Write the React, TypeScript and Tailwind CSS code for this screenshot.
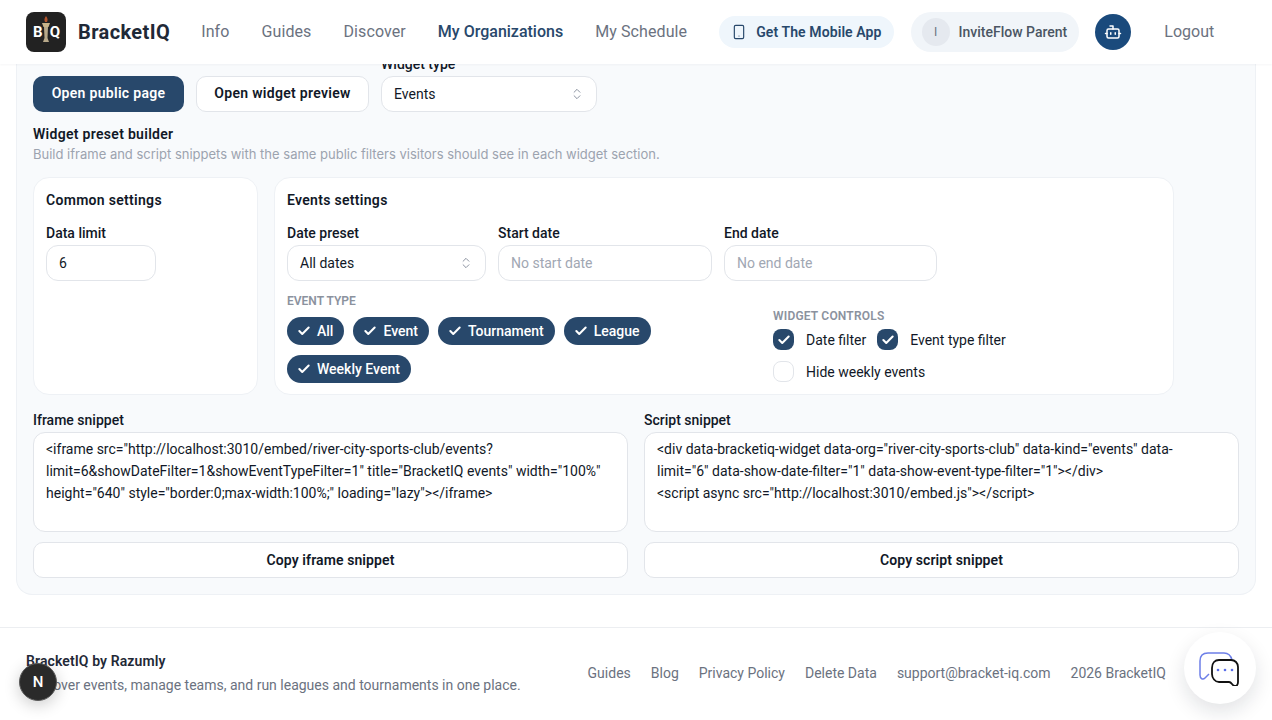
import { Check, ChevronsUpDown, Smartphone, Bot } from "lucide-react";

const navLinks = ["Info", "Guides", "Discover", "My Organizations", "My Schedule"];
const eventTypes = ["All", "Event", "Tournament", "League", "Weekly Event"];
const footerLinks = ["Guides", "Blog", "Privacy Policy", "Delete Data", "support@bracket-iq.com", "2026 BracketIQ"];

const iframeSnippet =
  '<iframe src="http://localhost:3010/embed/river-city-sports-club/events?limit=6&showDateFilter=1&showEventTypeFilter=1" title="BracketIQ events" width="100%" height="640" style="border:0;max-width:100%;" loading="lazy"></iframe>';
const scriptSnippet =
  '<div data-bracketiq-widget data-org="river-city-sports-club" data-kind="events" data-\nlimit="6" data-show-date-filter="1" data-show-event-type-filter="1"></div>\n<script async src="http://localhost:3010/embed.js"></script>';

function Logo() {
  return (
    <div className="relative flex h-10 w-10 items-center justify-center rounded-lg bg-[#222222]">
      <svg viewBox="0 0 40 40" className="absolute inset-0 h-10 w-10">
        <path d="M20 4c1.600 2 2 4 1 6h-2c-1-2-.6-4 1-6z" fill="#b4552d" />
        <path d="M16 11h8l-1.500 4h-5z" fill="#c9b48a" />
        <path d="M18 15h4l-.5 11 1.500 4h-6l1.500-4z" fill="#b8a98a" />
      </svg>
      <span className="relative flex w-full justify-between pr-[6px] pl-[7px] text-[15px] leading-none font-bold text-white">
        <span>B</span>
        <span>Q</span>
      </span>
    </div>
  );
}

function Header() {
  return (
    <header className="relative z-10 flex h-16 shrink-0 items-center bg-white pl-[26px] shadow-[0_1px_2px_rgba(15,23,42,0.04)]">
      <Logo />
      <span className="ml-3 text-[20px] font-bold tracking-[0.4px] text-[#1f2937]">BracketIQ</span>
      <nav className="ml-[31px] flex items-center gap-8">
        {navLinks.map((l) => (
          <span
            key={l}
            className={
              l === "My Organizations"
                ? "text-base font-medium text-[#28486b]"
                : "text-base tracking-[0.1px] text-[#6b7280]"
            }
          >
            {l}
          </span>
        ))}
      </nav>
      <div className="ml-8 flex h-8 items-center gap-[9px] rounded-full bg-[#eff6fc] px-3">
        <Smartphone size={16} strokeWidth={1.75} className="text-[#28486b]" />
        <span className="text-sm font-semibold tracking-[0.1px] text-[#28486b]">Get The Mobile App</span>
      </div>
      <div className="ml-[17px] flex h-10 items-center gap-[9px] rounded-full bg-[#f1f5f9] pr-3 pl-[11px]">
        <span className="flex h-7 w-7 items-center justify-center rounded-full bg-[#e5e9ef] text-xs text-[#6b7280]">
          I
        </span>
        <span className="text-sm font-medium text-[#4b5563]">InviteFlow Parent</span>
      </div>
      <div className="ml-4 flex h-9 w-9 items-center justify-center rounded-full bg-[#1a4a7c]">
        <Bot size={18} strokeWidth={2} className="text-white" />
      </div>
      <span className="ml-[33px] text-base text-[#6b7280]">Logout</span>
    </header>
  );
}

function Field({ label, width, children }: { label: string; width: string; children: React.ReactNode }) {
  return (
    <div className={width}>
      <div className="text-sm leading-6 font-medium text-[#111827]">{label}</div>
      {children}
    </div>
  );
}

function Box({ value, placeholder, select }: { value?: string; placeholder?: string; select?: boolean }) {
  return (
    <div className="flex h-9 items-center justify-between rounded-xl border border-[#e2e5ea] bg-white pr-3 pl-3 text-sm">
      <span className={value ? "text-[#111827]" : "text-[#a1a7b3]"}>{value ?? placeholder}</span>
      {select && <ChevronsUpDown size={14} strokeWidth={1.5} className="text-[#7b8494]" />}
    </div>
  );
}

function Chip({ label }: { label: string }) {
  return (
    <span className="flex h-7 items-center gap-[6px] rounded-full bg-[#28486b] pr-[11px] pb-px pl-[10px] text-sm font-medium text-white">
      <Check size={14} strokeWidth={3.5} />
      {label}
    </span>
  );
}

function Checkbox({ label, checked }: { label: string; checked?: boolean }) {
  return (
    <div className="flex items-center gap-3">
      <span
        className={
          checked
            ? "flex h-[21px] w-[21px] items-center justify-center rounded-lg bg-[#28486b] text-white"
            : "h-[21px] w-[21px] rounded-lg border border-[#e2e5ea] bg-white"
        }
      >
        {checked && <Check size={14} strokeWidth={3.5} />}
      </span>
      <span className="text-sm text-[#111827]">{label}</span>
    </div>
  );
}

function Snippet({ label, text, button }: { label: string; text: string; button: string }) {
  return (
    <div className="flex-1">
      <div className="mb-[3px] text-sm leading-[18px] font-medium text-[#111827]">{label}</div>
      <div className="h-[100px] rounded-xl border border-[#e2e5ea] bg-white px-3 py-[5px] text-sm leading-[22px] break-words whitespace-pre-wrap text-[#111827]">
        {text}
      </div>
      <div className="mt-[10px] flex h-9 items-center justify-center rounded-[10px] border border-[#e2e5ea] bg-white text-sm font-semibold tracking-[0.1px] text-[#111827]">
        {button}
      </div>
    </div>
  );
}

function ChatBubble() {
  return (
    <div className="absolute top-[632px] left-[1184px] flex h-[72px] w-[72px] items-center justify-center rounded-full bg-white shadow-[0_8px_20px_rgba(15,23,42,0.12)]">
      <svg viewBox="0 0 44 36" className="h-9 w-11" fill="none">
        <path
          d="M34 10c-1-4-4-7-8-7H10C5 3 2 6 2 11v14c0 4 3 5 5 3l4-4"
          stroke="#6d7fe8"
          strokeWidth="1.5"
        />
        <path
          d="M21 10h12c4 0 7 3 7 7v15c0 3-1 4-3 4-3 0-3-4-6-4H21c-4 0-7-4-7-8V18c0-5 3-8 7-8z"
          stroke="#111111"
          strokeWidth="1.8"
          fill="#ffffff"
        />
        <circle cx="20" cy="20" r="1.300" fill="#5b6ee8" />
        <circle cx="27" cy="20" r="1.300" fill="#5b6ee8" />
        <circle cx="34" cy="20" r="1.300" fill="#5b6ee8" />
      </svg>
    </div>
  );
}

export default function App() {
  return (
    <div className="relative flex h-[720px] flex-col overflow-hidden bg-white font-['Roboto',sans-serif]">
      <Header />
      <main className="mx-4 -mt-[12px] rounded-b-2xl border border-t-0 border-[#eef1f5] bg-[#f8fafc] px-4 pb-4">
        <div className="flex items-end gap-3">
          <span className="flex h-9 w-[151px] items-center justify-center rounded-[10px] bg-[#28486b] pb-[2px] text-sm font-semibold tracking-[0.3px] text-white">
            Open public page
          </span>
          <span className="flex h-9 w-[173px] items-center justify-center rounded-[10px] border border-[#e2e5ea] bg-white pb-[2px] text-sm font-semibold tracking-[0.3px] text-[#111827]">
            Open widget preview
          </span>
          <Field label="Widget type" width="w-[216px]">
            <Box value="Events" select />
          </Field>
        </div>

        <div className="mt-[12px] text-sm leading-5 font-semibold tracking-[0.3px] text-[#111827]">
          Widget preset builder
        </div>
        <div className="font-['Inter',sans-serif] text-[13px] leading-5 text-[#9ca3af]">
          Build iframe and script snippets with the same public filters visitors should see in each widget section.
        </div>

        <div className="mt-[13px] flex gap-4">
          <section className="h-[218px] w-[225px] rounded-2xl border border-[#eef1f5] bg-white px-3 pt-3">
            <h3 className="text-sm leading-5 font-semibold tracking-[0.3px] text-[#111827]">Common settings</h3>
            <div className="mt-[11px]">
              <Field label="Data limit" width="w-[110px]">
                <Box value="6" />
              </Field>
            </div>
          </section>

          <section className="h-[218px] w-[900px] rounded-2xl border border-[#eef1f5] bg-white px-3 pt-3">
            <h3 className="text-sm leading-5 font-semibold tracking-[0.3px] text-[#111827]">Events settings</h3>
            <div className="mt-[11px] flex gap-3">
              <Field label="Date preset" width="w-[199px]">
                <Box value="All dates" select />
              </Field>
              <Field label="Start date" width="w-[214px]">
                <Box placeholder="No start date" />
              </Field>
              <Field label="End date" width="w-[213px]">
                <Box placeholder="No end date" />
              </Field>
            </div>
            <div className="mt-[12px] flex">
              <div className="w-[486px]">
                <div className="text-xs leading-4 font-semibold text-[#8b929e]">EVENT TYPE</div>
                <div className="mt-2 flex w-[400px] flex-wrap gap-x-[9px] gap-y-[10px]">
                  {eventTypes.map((t) => (
                    <Chip key={t} label={t} />
                  ))}
                </div>
              </div>
              <div className="mt-[15px]">
                <div className="text-xs leading-4 font-semibold tracking-[0.2px] text-[#8b929e]">WIDGET CONTROLS</div>
                <div className="mt-[5px] flex gap-[11px]">
                  <Checkbox label="Date filter" checked />
                  <Checkbox label="Event type filter" checked />
                </div>
                <div className="mt-[11px]">
                  <Checkbox label="Hide weekly events" />
                </div>
              </div>
            </div>
          </section>
        </div>

        <div className="mt-4 flex gap-4">
          <Snippet label="Iframe snippet" text={iframeSnippet} button="Copy iframe snippet" />
          <Snippet label="Script snippet" text={scriptSnippet} button="Copy script snippet" />
        </div>
      </main>

      <footer className="mt-8 flex items-start justify-between border-t border-[#eceef1] pt-[23px] pr-[106px] pl-[26px]">
        <div>
          <div className="text-sm leading-5 font-semibold tracking-[0.1px] text-[#1f2937]">BracketIQ by Razumly</div>
          <div className="mt-1 text-sm leading-5 text-[#6b7280]">
            Discover events, manage teams, and run leagues and tournaments in one place.
          </div>
        </div>
        <div className="mt-[12px] flex gap-5 text-sm leading-5 text-[#6b7280]">
          {footerLinks.map((l) => (
            <span key={l}>{l}</span>
          ))}
        </div>
      </footer>

      <div className="absolute top-[663px] left-[19px] flex h-[38px] w-[38px] items-center justify-center rounded-full border border-[#5a5a5a] bg-[#2a2a2a] text-[15px] font-medium text-white shadow-[0_4px_16px_rgba(0,0,0,0.2)]">
        N
      </div>
      <ChatBubble />
    </div>
  );
}
